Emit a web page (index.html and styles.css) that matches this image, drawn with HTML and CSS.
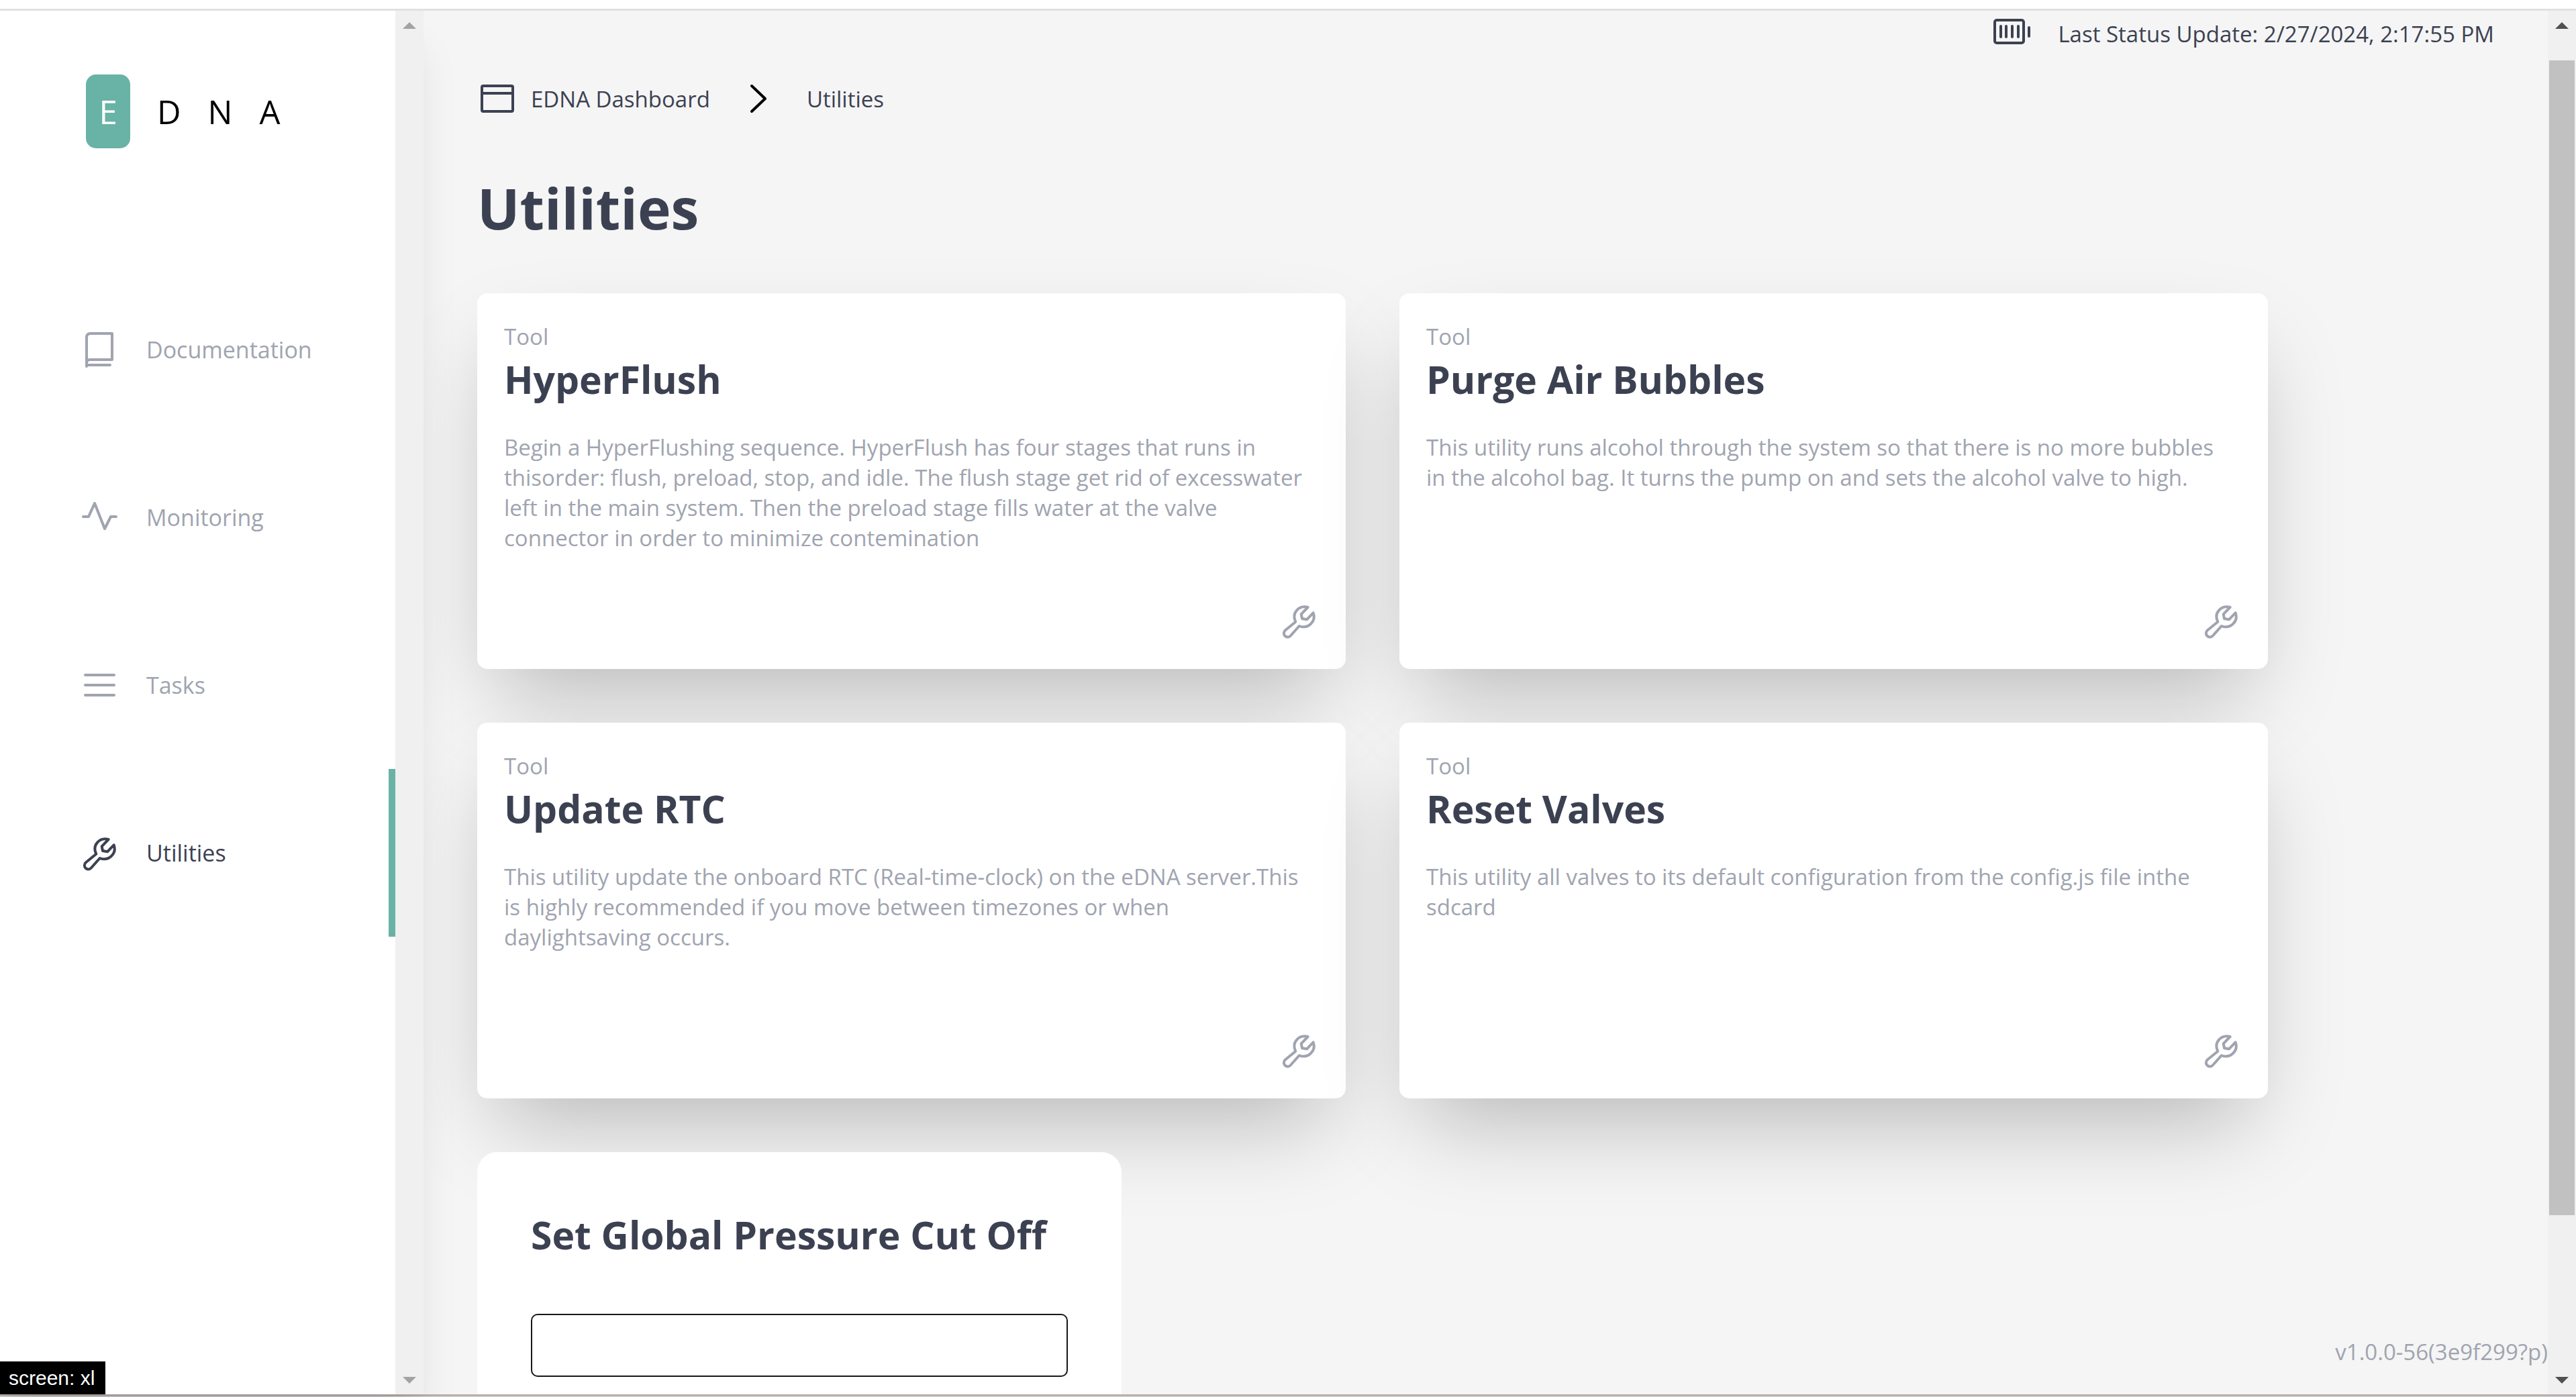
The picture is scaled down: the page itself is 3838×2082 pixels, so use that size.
FILE: index.html
```html
<!DOCTYPE html>
<html lang="en">
<head>
  <meta charset="utf-8">
  <title>EDNA Dashboard - Utilities</title>
  <link rel="stylesheet" href="styles.css">
</head>
<body>
  <svg class="sprite" aria-hidden="true">
    <symbol id="wrench" viewBox="0 0 60 60">
      <path d="M43.600 10 C30 6.500 19 18.500 25.300 31.700 L9.700 44.500 A5.700 5.700 0 1 0 17.800 52.500 L30.700 38 C43.500 43 56.500 31.500 51.600 18.300 L42 28.300 L35 27 L33.700 20.300 Z"/>
    </symbol>
  </svg>

  <div class="top-strip"></div>

  <div class="app">
    <aside class="sidebar">
      <div class="sidebar-body">
        <div class="logo"><span class="logo-mark">E</span><span>D</span><span>N</span><span>A</span></div>
        <nav class="nav">
          <a class="nav-item" href="#documentation">
            <svg class="icon" viewBox="0 0 60 60"><path d="M11 55 V12 Q11 6 17 6 H49 V45 H16 Q11 45 11 50 M11 53 H46"/></svg>
            Documentation
          </a>
          <a class="nav-item" href="#monitoring">
            <svg class="icon" viewBox="0 0 60 60"><path d="M6 29 H14 L23 9 L38 47 L47 29 H55"/></svg>
            Monitoring
          </a>
          <a class="nav-item" href="#tasks">
            <svg class="icon" viewBox="0 0 60 60"><path d="M9 15 H52 M9 30 H52 M9 45 H52"/></svg>
            Tasks
          </a>
          <a class="nav-item active" href="#utilities" aria-current="page">
            <svg class="icon"><use href="#wrench"/></svg>
            Utilities
          </a>
        </nav>
      </div>
      <div class="scrollbar muted">
        <svg class="arrow" viewBox="0 0 20 10"><path d="M0 10 L10 0 L20 10Z"/></svg>
        <svg class="arrow" viewBox="0 0 20 10"><path d="M0 0 L10 10 L20 0Z"/></svg>
      </div>
    </aside>

    <main class="main">
      <header class="status">
        <svg class="icon" viewBox="0 0 60 60"><rect x="8" y="10" width="43" height="34" rx="3"/><path d="M17 19 V35 M25 19 V35 M34 19 V35 M43 19 V35 M59 21 V34"/></svg>
        <span>Last Status Update: 2/27/2024, 2:17:55 PM</span>
      </header>

      <nav class="breadcrumb" aria-label="Breadcrumb">
        <a href="#dashboard">
          <svg class="icon" viewBox="0 0 60 60"><rect x="7" y="11" width="46" height="38" rx="2"/><path d="M7 22 H53"/></svg>
          EDNA Dashboard
        </a>
        <svg class="icon chevron" viewBox="0 0 60 60"><path d="M20 11 L40 30 L20 49"/></svg>
        <a href="#utilities">Utilities</a>
      </nav>

      <h1>Utilities</h1>

      <section class="tools">
        <article class="card">
          <p class="kind">Tool</p>
          <h2>HyperFlush</h2>
          <p class="text">Begin a HyperFlushing sequence. HyperFlush has four stages that runs in thisorder: flush, preload, stop, and idle. The flush stage get rid of excesswater left in the main system. Then the preload stage fills water at the valve connector in order to minimize contemination</p>
          <button class="run" aria-label="Run HyperFlush"><svg class="icon"><use href="#wrench"/></svg></button>
        </article>
        <article class="card">
          <p class="kind">Tool</p>
          <h2>Purge Air Bubbles</h2>
          <p class="text">This utility runs alcohol through the system so that there is no more bubbles in the alcohol bag. It turns the pump on and sets the alcohol valve to high.</p>
          <button class="run" aria-label="Run Purge Air Bubbles"><svg class="icon"><use href="#wrench"/></svg></button>
        </article>
        <article class="card">
          <p class="kind">Tool</p>
          <h2>Update RTC</h2>
          <p class="text">This utility update the onboard RTC (Real-time-clock) on the eDNA server.This is highly recommended if you move between timezones or when daylightsaving occurs.</p>
          <button class="run" aria-label="Run Update RTC"><svg class="icon"><use href="#wrench"/></svg></button>
        </article>
        <article class="card">
          <p class="kind">Tool</p>
          <h2>Reset Valves</h2>
          <p class="text">This utility all valves to its default configuration from the config.js file inthe sdcard</p>
          <button class="run" aria-label="Run Reset Valves"><svg class="icon"><use href="#wrench"/></svg></button>
        </article>
      </section>

      <form class="pressure">
        <h2><label for="pressure">Set Global Pressure Cut Off</label></h2>
        <input id="pressure" type="text">
      </form>

      <p class="version">v1.0.0-56(3e9f299?p)</p>
    </main>

    <div class="scrollbar">
      <svg class="arrow" viewBox="0 0 20 10"><path d="M0 10 L10 0 L20 10Z"/></svg>
      <div class="track"><div class="thumb"></div></div>
      <svg class="arrow" viewBox="0 0 20 10"><path d="M0 0 L10 10 L20 0Z"/></svg>
    </div>

    <div class="screen-badge">screen: xl</div>
  </div>

  <div class="bottom-strip"></div>
</body>
</html>
```

FILE: styles.css
```css
* {
  box-sizing: border-box;
}

body {
  margin: 0;
  height: 100vh;
  display: flex;
  flex-direction: column;
  overflow: hidden;
  background: #fff;
  color: #3c4152;
  font-family: "Open Sans", "Noto Sans", sans-serif;
  font-size: 33px;
}

h1, h2, p {
  margin: 0;
}

a {
  color: inherit;
  text-decoration: none;
}

.sprite {
  position: absolute;
  width: 0;
  height: 0;
}

.icon {
  flex: none;
  width: 60px;
  height: 60px;
  overflow: visible;
  fill: none;
  stroke: currentColor;
  stroke-width: 4px;
  stroke-linecap: round;
  stroke-linejoin: round;
}

.top-strip {
  flex: none;
  height: 16px;
  border-bottom: 3px solid #e1e1e1;
}

.bottom-strip {
  flex: none;
  height: 4px;
  background: #e3dad9;
  border-top: 3px solid #b9afae;
}

.app {
  position: relative;
  flex: 1;
  min-height: 0;
  display: flex;
}

/* Sidebar */

.sidebar {
  position: relative;
  z-index: 1;
  flex: none;
  display: flex;
  background: #fff;
  box-shadow: 0 50px 62px -12px rgba(0, 0, 0, 0.1), 0 25px 25px -12px rgba(0, 0, 0, 0.04);
}

.sidebar-body {
  width: 589px;
  padding-top: 95px;
}

.logo {
  display: flex;
  align-items: center;
  gap: 40px;
  height: 110px;
  margin: 0 0 175px 128px;
  font-size: 49px;
  color: #000;
}

.logo-mark {
  width: 66px;
  line-height: 110px;
  border-radius: 15px;
  background: #68b3a5;
  color: #fff;
  text-align: center;
}

.nav-item {
  display: flex;
  align-items: center;
  gap: 40px;
  height: 250px;
  padding-left: 118px;
  border-right: 10px solid transparent;
  color: #a0a4b0;
  font-size: 34px;
}

.nav-item.active {
  border-color: #68b3a5;
  color: #3c4152;
}

/* Scrollbars */

.scrollbar {
  flex: none;
  width: 42px;
  padding: 17px 2px 16px;
  display: flex;
  flex-direction: column;
  justify-content: space-between;
  align-items: center;
  background: #f0f0f0;
  color: #505050;
}

.scrollbar.muted {
  color: #a3a3a3;
}

.arrow {
  flex: none;
  width: 20px;
  height: 10px;
  fill: currentColor;
}

.track {
  flex: 1;
  align-self: stretch;
  padding: 47px 0 50px;
}

.thumb {
  height: 90%;
  background: #c1c1c1;
}

/* Main column */

.main {
  position: relative;
  flex: 1;
  min-width: 0;
  overflow: hidden;
  padding: 0 80px;
  background: #f5f5f5;
}

.status {
  display: flex;
  justify-content: flex-end;
  align-items: center;
  gap: 42px;
  height: 68px;
  margin-bottom: 33px;
}

.breadcrumb {
  display: flex;
  align-items: center;
  gap: 42px;
  height: 60px;
}

.breadcrumb a {
  display: flex;
  align-items: center;
  gap: 20px;
}

.chevron {
  color: #000;
}

h1 {
  margin: 78px 0 72px;
  font-size: 84px;
  line-height: 110px;
}

h2 {
  font-size: 57px;
  line-height: 76px;
}

.tools {
  display: grid;
  grid-template-columns: 1fr 1fr;
  gap: 80px;
  max-width: 2668px;
  margin-bottom: 80px;
}

.card {
  display: flex;
  flex-direction: column;
  min-height: 560px;
  padding: 40px 40px 42px;
  border-radius: 15px;
  background: #fff;
  color: #a0a4b0;
  box-shadow: 0 62px 125px -30px rgba(0, 0, 0, 0.25);
}

.kind {
  line-height: 50px;
}

.card h2 {
  margin-bottom: 41px;
  color: #3c4152;
}

.text {
  padding-right: 12px;
  line-height: 45px;
}

.run {
  display: flex;
  margin: auto 0 0 auto;
  padding: 0;
  border: 0;
  background: none;
  color: inherit;
}

.pressure {
  position: relative;
  width: 960px;
  padding: 80px;
  border-radius: 30px;
  background: #fff;
}

.pressure h2 {
  margin: 5px 0 80px;
}

.pressure input {
  display: block;
  width: 100%;
  height: 94px;
  padding: 0 30px;
  border: 2px solid #181818;
  border-radius: 10px;
  background: #fff;
  font: inherit;
  color: inherit;
}

.version {
  position: absolute;
  right: 0;
  bottom: 38px;
  line-height: 50px;
  color: #a0a4b0;
}

.screen-badge {
  position: absolute;
  left: 0;
  bottom: 0;
  z-index: 2;
  padding: 0 16px 0 13px;
  background: #000;
  color: #fff;
  font: 30px/49px "Liberation Sans", Arial, sans-serif;
}
```
